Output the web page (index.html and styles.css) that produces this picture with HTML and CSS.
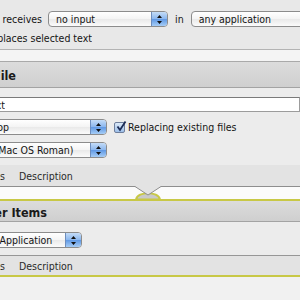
FILE: index.html
```html
<!DOCTYPE html>
<html lang="en">
<head>
    <meta charset="UTF-8">
    <title>Workflow</title>
    <link rel="stylesheet" href="styles.css">
</head>
<body>
<div class="workflow">

    <section class="action first-action">
        <div class="row receives-row">
            <div class="clip receives-label"><span>Service receives</span></div>
            <div class="popup popup-input">
                <span class="popup-text">no input</span>
                <span class="stepper"><svg width="7" height="11" viewBox="0 0 7 11"><path d="M3.5 1 L6 4 L1 4 Z M3.5 10 L6 7 L1 7 Z" fill="#111"/></svg></span>
            </div>
            <span class="in-label">in</span>
            <div class="popup popup-app">
                <span class="popup-text">any application</span>
                <span class="stepper"><svg width="7" height="11" viewBox="0 0 7 11"><path d="M3.5 1 L6 4 L1 4 Z M3.5 10 L6 7 L1 7 Z" fill="#111"/></svg></span>
            </div>
        </div>
        <div class="row replaces-row">
            <div class="clip replaces-label"><span>Output replaces selected text</span></div>
        </div>
    </section>

    <div class="spacer"></div>

    <section class="action">
        <header class="action-head"><div class="clip title-file"><span>New Text File</span></div></header>
        <div class="options file-options">
            <div class="field"><div class="clip field-text"><span>Untitled Text</span></div></div>
            <div class="row">
                <div class="popup popup-where">
                    <span class="popup-text">Desktop</span>
                    <span class="stepper"><svg width="7" height="11" viewBox="0 0 7 11"><path d="M3.5 1 L6 4 L1 4 Z M3.5 10 L6 7 L1 7 Z" fill="#111"/></svg></span>
                </div>
                <div class="check">
                    <span class="box"><svg width="12" height="12" viewBox="0 0 12 12"><path d="M2.5 5.5 L5 9 L10.5 0.5" fill="none" stroke="#1c2b55" stroke-width="1.8"/></svg></span>
                    <span>Replacing existing files</span>
                </div>
            </div>
            <div class="row">
                <div class="popup popup-enc">
                    <span class="popup-text">Western (Mac OS Roman)</span>
                    <span class="stepper"><svg width="7" height="11" viewBox="0 0 7 11"><path d="M3.5 1 L6 4 L1 4 Z M3.5 10 L6 7 L1 7 Z" fill="#111"/></svg></span>
                </div>
            </div>
        </div>
        <div class="tabs">
            <div class="clip tab-hidden"><span>Options</span><span class="tab-gap">Results</span></div>
            <span class="tab">Description</span>
        </div>
    </section>

    <div class="link">
        <svg class="notch" width="36" height="17" viewBox="0 0 36 17">
            <path d="M6 14.5 C8 6 28 6 30 14.5 Z" fill="#c9c9c9" stroke="#c8c846" stroke-width="2"/>
            <path d="M5 0 L5 1.5 L18 10 L31 1.5 L31 0 Z" fill="#e3e3e3"/>
            <path d="M0 1.5 L5 1.5 L18 10 L31 1.5 L36 1.5" fill="none" stroke="#8e8e8e" stroke-width="1"/>
        </svg>
    </div>

    <section class="action selected">
        <header class="action-head second-head"><div class="clip title-open"><span>Open Finder Items</span></div></header>
        <div class="options open-options">
            <div class="row">
                <div class="popup popup-with">
                    <span class="popup-text">Default Application</span>
                    <span class="stepper"><svg width="7" height="11" viewBox="0 0 7 11"><path d="M3.5 1 L6 4 L1 4 Z M3.5 10 L6 7 L1 7 Z" fill="#111"/></svg></span>
                </div>
            </div>
        </div>
        <div class="tabs bottom-tabs">
            <div class="clip tab-hidden"><span>Options</span><span class="tab-gap">Results</span></div>
            <span class="tab">Description</span>
        </div>
    </section>

</div>
</body>
</html>
```

FILE: styles.css
```css
html, body {
    margin: 0;
    padding: 0;
}
body {
    width: 300px;
    height: 300px;
    overflow: hidden;
    background: #f1f1f1;
    font-family: "DejaVu Sans Condensed", "DejaVu Sans", sans-serif;
    font-size: 10.5px;
    color: #151515;
}

/* clipped text: right aligned, overflow goes off the left edge */
.clip {
    display: flex;
    justify-content: flex-end;
    overflow: hidden;
    white-space: nowrap;
    flex: none;
}

.row {
    display: flex;
    align-items: center;
}

/* top action */
.first-action {
    background: #e8e8e8;
    height: 50px;
    border-bottom: 1px solid #b3b3b3;
    padding-top: 11px;
    box-sizing: border-box;
}
.receives-row {
    height: 16px;
}
.receives-label {
    width: 42px;
}
.popup-input {
    margin-left: 6px;
    width: 120px;
}
.in-label {
    margin: 0 7px;
}
.popup-app {
    width: 130px;
}
.replaces-row {
    margin-top: 5px;
    height: 12px;
}
.replaces-label {
    width: 92px;
}

.spacer {
    height: 11px;
    background: #f4f4f4;
    border-bottom: 1px solid #a9a9a9;
}

/* popups */
.popup {
    display: flex;
    align-items: center;
    height: 16px;
    box-sizing: border-box;
    border: 1px solid #8c8c8c;
    border-radius: 4px;
    background: linear-gradient(#ffffff, #f4f4f4 50%, #e9e9e9 51%, #fbfbfb);
    flex: none;
}
.popup-text {
    flex: 1;
    padding-left: 7px;
    white-space: nowrap;
    overflow: hidden;
}
.stepper {
    width: 15px;
    height: 14px;
    display: flex;
    align-items: center;
    justify-content: center;
    background: linear-gradient(#c4dcf7, #8ab6ee 50%, #5f98e4 51%, #a6cdf6);
    border-left: 1px solid #6d8dbd;
    border-radius: 0 3px 3px 0;
}

/* action chrome */
.action-head {
    height: 26px;
    background: linear-gradient(#dcdcdc, #cfcfcf);
    border-bottom: 1px solid #a3a3a3;
    display: flex;
    align-items: center;
    padding-top: 2px;
    box-sizing: border-box;
    font-weight: bold;
    font-size: 12.5px;
    color: #1a1a1a;
}
.title-file {
    width: 16px;
}
.title-open {
    width: 47px;
}
.second-head {
    height: 21px;
}

.options {
    background: #ececec;
}
.file-options {
    padding: 9px 0 7px;
}
.field {
    height: 15px;
    box-sizing: border-box;
    background: #fff;
    border: 1px solid #9c9c9c;
    border-top-color: #7a7a7a;
    margin-left: -2px;
    display: flex;
    align-items: center;
}
.field-text {
    width: 6px;
}
.file-options .row {
    margin-top: 7px;
}
.popup-where {
    margin-left: -38px;
    width: 145px;
}
.popup-enc {
    margin-left: -55px;
    width: 162px;
}
.check {
    display: flex;
    align-items: center;
    margin-left: 7px;
}
.box {
    width: 11px;
    height: 11px;
    box-sizing: border-box;
    border: 1px solid #6f7f9c;
    border-radius: 2px;
    background: linear-gradient(#dbe9f8, #9dbfe9);
    margin-right: 3px;
    position: relative;
}
.box svg {
    position: absolute;
    left: 0;
    top: -2px;
}

.tabs {
    height: 21px;
    background: #e3e3e3;
    display: flex;
    align-items: center;
    color: #2a2a2a;
}
.tab-hidden {
    width: 5px;
}
.tab-gap {
    margin-left: 15px;
}
.tab {
    margin-left: 14px;
}

/* connector between actions */
.link {
    height: 12px;
    background: #fbfbfb;
    border-top: 1px solid #8e8e8e;
    position: relative;
}
.notch {
    position: absolute;
    left: 130px;
    top: -2px;
}

.selected {
    border-top: 2px solid #c8c846;
}
.open-options {
    padding: 10px 0 7px;
}
.popup-with {
    margin-left: -46px;
    width: 128px;
}
.bottom-tabs {
    border-top: 1px solid #979797;
    border-bottom: 2px solid #c8c846;
    height: 22px;
    box-sizing: border-box;
}
```
